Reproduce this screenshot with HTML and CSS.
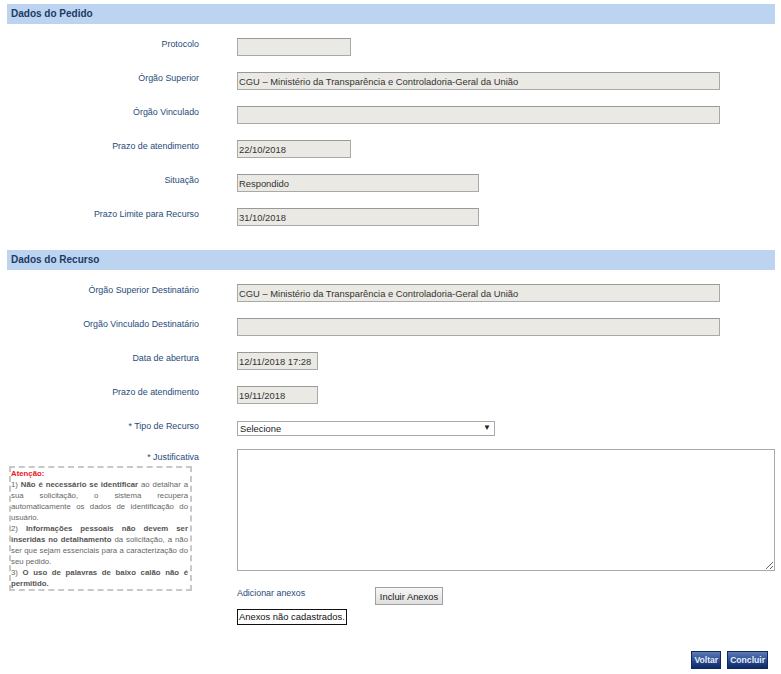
FILE: index.html
```html
<!DOCTYPE html>
<html lang="pt-BR">
<head>
    <meta charset="UTF-8">
    <title>Recurso</title>
    <link rel="stylesheet" href="styles.css">
</head>
<body>
    <div class="page">
        <div class="section-title">Dados do Pedido</div>
        <div class="form-grid first">
            <label class="lbl">Protocolo</label>
            <div><input class="campo curto" type="text" value="" readonly></div>

            <label class="lbl">Órgão Superior</label>
            <div><input class="campo longo" type="text" value="CGU – Ministério da Transparência e Controladoria-Geral da União" readonly></div>

            <label class="lbl">Órgão Vinculado</label>
            <div><input class="campo longo" type="text" value="" readonly></div>

            <label class="lbl">Prazo de atendimento</label>
            <div><input class="campo curto" type="text" value="22/10/2018" readonly></div>

            <label class="lbl">Situação</label>
            <div><input class="campo medio" type="text" value="Respondido" readonly></div>

            <label class="lbl">Prazo Limite para Recurso</label>
            <div><input class="campo medio" type="text" value="31/10/2018" readonly></div>
        </div>

        <div class="section-title">Dados do Recurso</div>
        <div class="form-grid">
            <label class="lbl">Órgão Superior Destinatário</label>
            <div><input class="campo longo" type="text" value="CGU – Ministério da Transparência e Controladoria-Geral da União" readonly></div>

            <label class="lbl">Orgão Vinculado Destinatário</label>
            <div><input class="campo longo" type="text" value="" readonly></div>

            <label class="lbl">Data de abertura</label>
            <div><input class="campo data" type="text" value="12/11/2018 17:28" readonly></div>

            <label class="lbl">Prazo de atendimento</label>
            <div><input class="campo data" type="text" value="19/11/2018" readonly></div>

            <label class="lbl">* Tipo de Recurso</label>
            <div class="select-wrap">
                <select class="tipo">
                    <option>Selecione</option>
                </select>
                <span class="seta">▼</span>
            </div>
        </div>

        <div class="justif-row">
            <div class="justif-left">
                <label class="lbl">* Justificativa</label>
                <div class="atencao">
                    <span class="atencao-titulo">Atenção:</span><br>
                    1) <b>Não é necessário se identificar</b> ao detalhar a sua solicitação, o sistema recupera automaticamente os dados de identificação do usuário.<br>
                    2) <b>Informações pessoais não devem ser inseridas no detalhamento</b> da solicitação, a não ser que sejam essenciais para a caracterização do seu pedido.<br>
                    3) <b>O uso de palavras de baixo calão não é permitido.</b>
                </div>
            </div>
            <div class="justif-right">
                <textarea class="justificativa"></textarea>
                <div class="anexos">
                    <span class="anexos-lbl">Adicionar anexos</span>
                    <button class="btn-cinza">Incluir Anexos</button>
                </div>
                <div class="sem-anexos">Anexos não cadastrados.</div>
            </div>
        </div>

        <div class="acoes">
            <button class="btn-azul">Voltar</button>
            <button class="btn-azul">Concluir</button>
        </div>
    </div>
</body>
</html>
```

FILE: styles.css
```css
body {
    margin: 0;
    padding: 0;
    background-color: #fff;
    font-family: "Liberation Sans", Arial, sans-serif;
}
.page {
    padding: 4px 6px 0 7px;
}
.section-title {
    background-color: #bdd4f1;
    color: #1b3a66;
    font-weight: bold;
    font-size: 10px;
    height: 20px;
    line-height: 20px;
    padding-left: 4px;
}
.form-grid {
    display: grid;
    grid-template-columns: 192px 1fr;
    column-gap: 38px;
    row-gap: 16px;
    padding: 14px 0 24px;
}
.form-grid:not(.first) {
    padding-bottom: 13px;
}
.lbl {
    display: block;
    text-align: right;
    color: #1f4b7a;
    font-size: 8.9px;
    line-height: 12px;
}
.campo {
    box-sizing: border-box;
    height: 18px;
    margin: 0;
    padding: 0 1px;
    border: 1px solid #a9a9a9;
    border-top-color: #999;
    background-color: #ebe9e3;
    color: #333;
    font-family: "Liberation Sans", Arial, sans-serif;
    font-size: 9.4px;
    display: block;
}
.curto {
    width: 114px;
}
.medio {
    width: 242px;
}
.longo {
    width: 483px;
}
.data {
    width: 81px;
}
.select-wrap {
    position: relative;
    width: 258px;
    margin-top: 1px;
}
.tipo {
    appearance: none;
    box-sizing: border-box;
    width: 258px;
    height: 15px;
    margin: 0;
    padding: 0 2px;
    border: 1px solid #a9a9a9;
    background-color: #fff;
    color: #222;
    font-family: "Liberation Sans", Arial, sans-serif;
    font-size: 9.4px;
    line-height: 13px;
    display: block;
}
.seta {
    position: absolute;
    right: 4px;
    top: 2px;
    font-size: 8px;
    color: #222;
    pointer-events: none;
}
.justif-row {
    display: grid;
    grid-template-columns: 192px 1fr;
    column-gap: 38px;
}
.justif-left .lbl {
    padding-top: 2px;
}
.atencao {
    box-sizing: border-box;
    width: 183px;
    margin: 3px 0 0 2px;
    padding: 0 2px 0 0;
    border: 2px dashed #c8c8c8;
    color: #666;
    font-size: 7.8px;
    line-height: 11px;
    text-align: justify;
}
.atencao b {
    color: #555;
}
.atencao-titulo {
    color: #f0141e;
    font-weight: bold;
}
.justificativa {
    display: block;
    box-sizing: border-box;
    width: 538px;
    height: 122px;
    margin: 0;
    border: 1px solid #a9a9a9;
    background-color: #fff;
}
.anexos {
    display: flex;
    align-items: flex-start;
    margin-top: 16px;
}
.anexos-lbl {
    width: 138px;
    font-size: 8.9px;
    color: #1f4b7a;
    padding-top: 1px;
}
.btn-cinza {
    box-sizing: border-box;
    height: 18px;
    width: 68px;
    padding: 0;
    border: 1px solid #a0a0a0;
    background: linear-gradient(#f7f7f7, #dedede);
    color: #222;
    font-family: "Liberation Sans", Arial, sans-serif;
    font-size: 9.4px;
}
.sem-anexos {
    display: inline-block;
    margin-top: 4px;
    padding: 1px 1px 2px;
    border: 1px solid #111;
    font-size: 9.4px;
    color: #111;
}
.acoes {
    display: flex;
    justify-content: flex-end;
    gap: 6px;
    padding: 26px 7px 0 0;
}
.btn-azul {
    box-sizing: border-box;
    height: 18px;
    padding: 0 2px;
    border: 1px solid #12285a;
    background: linear-gradient(#5b7cb8, #2a4a8a 55%, #0f2a66);
    color: #e6eeff;
    font-family: "Liberation Sans", Arial, sans-serif;
    font-weight: bold;
    font-size: 8.6px;
}
```
